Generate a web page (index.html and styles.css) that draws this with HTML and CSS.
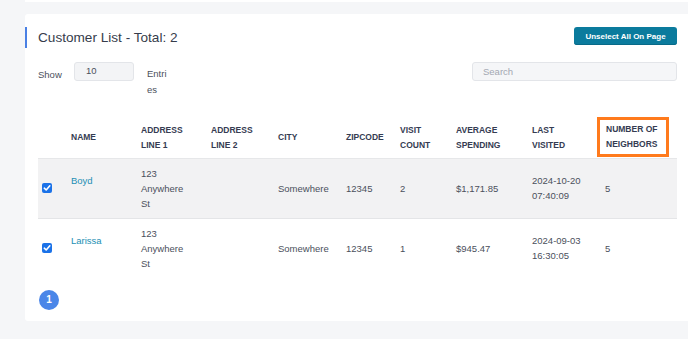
FILE: index.html
```html
<!DOCTYPE html>
<html>
<head>
<meta charset="utf-8">
<link rel="stylesheet" href="styles.css">
</head>
<body>
<div class="strip"></div>
<div class="card">
  <div class="head">
    <h1 class="title">Customer List - Total: 2</h1>
    <button class="btn">Unselect All On Page</button>
  </div>
  <div class="controls">
    <span class="show">Show</span>
    <div class="len">10</div>
    <span class="entries">Entri es</span>
    <div class="search">Search</div>
  </div>
  <table class="grid">
    <colgroup>
      <col style="width:25px"><col style="width:70px"><col style="width:70px"><col style="width:67px"><col style="width:68px"><col style="width:54px"><col style="width:56px"><col style="width:76px"><col style="width:73px"><col style="width:80px">
    </colgroup>
    <thead>
      <tr>
        <th></th>
        <th>NAME</th>
        <th>ADDRESS<br>LINE 1</th>
        <th>ADDRESS<br>LINE 2</th>
        <th>CITY</th>
        <th>ZIPCODE</th>
        <th>VISIT<br>COUNT</th>
        <th>AVERAGE<br>SPENDING</th>
        <th>LAST<br>VISITED</th>
        <th class="hl-cell"><span class="hl">NUMBER OF<br>NEIGHBORS</span></th>
      </tr>
    </thead>
    <tbody>
      <tr class="odd">
        <td class="cb-cell"><span class="cb"><svg viewBox="0 0 10 10" width="10" height="10"><path d="M2.3 5.2 L4.2 7 L7.8 2.8" fill="none" stroke="#fff" stroke-width="1.6" stroke-linecap="round" stroke-linejoin="round"/></svg></span></td>
        <td><a class="name">Boyd</a><div class="sub"></div></td>
        <td>123<br>Anywhere<br>St</td>
        <td></td>
        <td>Somewhere</td>
        <td>12345</td>
        <td>2</td>
        <td>$1,171.85</td>
        <td>2024-10-20<br>07:40:09</td>
        <td>5</td>
      </tr>
      <tr>
        <td class="cb-cell"><span class="cb"><svg viewBox="0 0 10 10" width="10" height="10"><path d="M2.3 5.2 L4.2 7 L7.8 2.8" fill="none" stroke="#fff" stroke-width="1.6" stroke-linecap="round" stroke-linejoin="round"/></svg></span></td>
        <td><a class="name">Larissa</a><div class="sub"></div></td>
        <td>123<br>Anywhere<br>St</td>
        <td></td>
        <td>Somewhere</td>
        <td>12345</td>
        <td>1</td>
        <td>$945.47</td>
        <td>2024-09-03<br>16:30:05</td>
        <td>5</td>
      </tr>
    </tbody>
  </table>
  <div class="pager"><span class="page">1</span></div>
</div>
</body>
</html>
```

FILE: styles.css
```css
* { box-sizing: border-box; }
html, body { margin: 0; padding: 0; }
body {
  background: #f5f6f8;
  font-family: "Liberation Sans", Arial, sans-serif;
  color: #4b505c;
  width: 688px;
  height: 339px;
  overflow: hidden;
}
.strip {
  margin-left: 25px;
  height: 2px;
  background: #fff;
}
.card {
  margin: 12px 0 0 25px;
  background: #fff;
  padding: 13px 11px 12px 13px;
  height: 307px;
  border-radius: 3px 0 0 3px;
  position: relative;
}
.head {
  display: flex;
  align-items: flex-start;
  justify-content: space-between;
  height: 21px;
}
.title {
  margin: 0;
  font-weight: normal;
  font-size: 13.6px;
  line-height: 21px;
  color: #363c4b;
  position: relative;
}
.title::before {
  content: "";
  position: absolute;
  left: -13px;
  top: 0;
  width: 2px;
  height: 21px;
  background: #4a80e4;
}
.btn {
  margin: 0;
  border: 0;
  border-radius: 3px;
  background: #0b7b9d;
  box-shadow: inset 0 -1px 0 #086a88;
  color: #fff;
  font-family: "Liberation Sans", Arial, sans-serif;
  font-weight: bold;
  font-size: 8px;
  height: 18px;
  width: 103px;
  padding: 0;
  text-align: center;
}
.controls {
  display: flex;
  align-items: flex-start;
  margin-top: 14px;
  font-size: 9.5px;
}
.show {
  margin-top: 6px;
  line-height: 14px;
  width: 36px;
}
.len {
  width: 60px;
  height: 19px;
  background: #f3f4f6;
  border: 1px solid #e3e5e9;
  border-radius: 3px;
  padding: 2px 0 0 11px;
  line-height: 12px;
  color: #4b505c;
}
.entries {
  margin-left: 13px;
  width: 22px;
  margin-top: 4px;
  line-height: 16px;
}
.search {
  margin-left: auto;
  width: 205px;
  height: 19px;
  background: #f5f6f8;
  border: 1px solid #e3e5e9;
  border-radius: 3px;
  padding-left: 10px;
  line-height: 17px;
  color: #a3a8b2;
}
.grid {
  margin-top: 12px;
  width: 639px;
  border-collapse: collapse;
  table-layout: fixed;
  font-size: 9.5px;
}
.grid th {
  font-weight: bold;
  font-size: 8.5px;
  text-align: left;
  color: #353c52;
  line-height: 15px;
  height: 48px;
  padding: 8px 0 0 8px;
  vertical-align: middle;
  border-bottom: 1px solid #e6e7e9;
  white-space: nowrap;
}
.grid th.hl-cell { padding-left: 0; }
.hl {
  display: inline-block;
  border: 3px solid #ff7a1c;
  padding: 2px 6px;
  width: 72px;
  height: 40px;
  margin-top: -1px;
  vertical-align: middle;
}
.grid td {
  line-height: 15px;
  height: 60px;
  padding: 0 0 0 8px;
  vertical-align: middle;
  color: #4b505c;
}
.grid tr.odd td {
  background: #f2f2f3;
  border-bottom: 1px solid #e4e5e7;
}
.grid td.cb-cell { padding-left: 4px; }
.cb {
  display: block;
  width: 10px;
  height: 10px;
  border-radius: 2px;
  background: #1b72e8;
}
.cb svg { display: block; }
.name {
  color: #1d8fb3;
  display: block;
}
.sub { height: 15px; }
.pager {
  margin-top: 11px;
  padding-left: 1px;
}
.page {
  display: inline-block;
  width: 20px;
  height: 20px;
  border-radius: 50%;
  background: #4a86e8;
  color: #fff;
  font-weight: bold;
  font-size: 10px;
  line-height: 20px;
  text-align: center;
}
```
